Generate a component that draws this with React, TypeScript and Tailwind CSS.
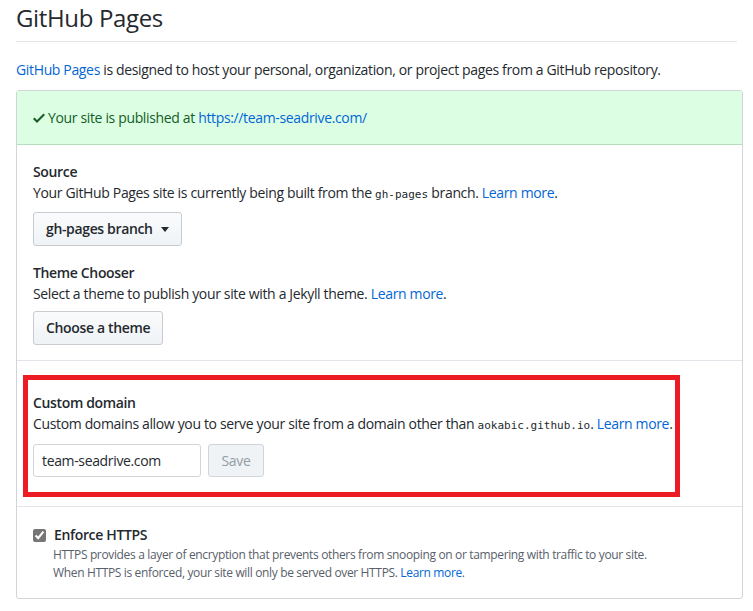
const font = { fontFamily: '"Segoe UI", "Open Sans", "Liberation Sans", sans-serif' };
const mono = { fontFamily: '"DejaVu Sans Mono", "Liberation Mono", monospace' };

function LearnMore() {
  return (
    <>
      {' '}
      <a href="#" className="text-[#0366d6]">Learn more</a>.
    </>
  );
}

export default function App() {
  return (
    <div className="bg-white text-[#24292e] text-sm tracking-[-0.025em] min-h-screen" style={font}>
      <div className="px-4 pt-[3px]">
        <h2 className="text-2xl font-normal leading-[30px] pb-2 border-b border-[#e1e4e8]">GitHub Pages</h2>
        <p className="mt-[17px] leading-[21px]">
          <a href="#" className="text-[#0366d6]">GitHub Pages</a> is designed to host your personal, organization, or project pages from a GitHub repository.
        </p>

        <div className="mt-[10px] border border-[#d1d5da] rounded-[3px] w-[727px]">
          <div className="bg-[#dcffe4] border-b border-[#b4dfbe] px-4 h-[54px] flex items-center text-[#165c26]">
            <svg width="12" height="16" viewBox="0 0 12 16" className="mr-[3px] fill-current">
              <path fillRule="evenodd" d="M12 5l-8 8-4-4 1.5-1.5L4 10l6.5-6.5L12 5z" />
            </svg>
            Your site is published at&nbsp;<a href="#" className="text-[#0366d6]">https://team-seadrive.com/</a>
          </div>

          <div className="px-4 pt-4 pb-[15px] border-b border-[#e1e4e8]">
            <div className="font-semibold leading-[21px]">Source</div>
            <p className="leading-[21px]">
              Your GitHub Pages site is currently being built from the{' '}
              <code className="text-[11px] tracking-normal" style={mono}>gh-pages</code> branch.
              <LearnMore />
            </p>
            <button className="mt-[7px] h-[34px] px-3 flex items-center gap-2 font-semibold border border-[#c8ccd1] rounded-[3px] bg-gradient-to-b from-[#fafbfc] to-[#eff3f6]">
              gh-pages branch
              <svg width="8" height="5" viewBox="0 0 8 5"><path d="M0 0h8L4 5z" fill="#24292e" /></svg>
            </button>

            <div className="font-semibold leading-[21px] mt-[16px]">Theme Chooser</div>
            <p className="leading-[21px]">
              Select a theme to publish your site with a Jekyll theme.
              <LearnMore />
            </p>
            <button className="mt-[7px] h-[34px] px-3 font-semibold border border-[#c8ccd1] rounded-[3px] bg-gradient-to-b from-[#fafbfc] to-[#eff3f6]">
              Choose a theme
            </button>
          </div>

          <div className="px-[6px] pt-[14px] pb-[9px] border-b border-[#e1e4e8]">
            <div className="w-[657px] border-[5px] border-[#ed1c24] px-[5px] pt-[12px] pb-[15px]">
              <div className="font-semibold leading-[21px]">Custom domain</div>
              <p className="leading-[21px] whitespace-nowrap">
                Custom domains allow you to serve your site from a domain other than{' '}
                <code className="text-[11px] tracking-normal" style={mono}>aokabic.github.io</code>.
                <LearnMore />
              </p>
              <div className="flex gap-[7px] mt-[8px]">
                <input
                  defaultValue="team-seadrive.com"
                  className="w-[168px] h-[33px] px-2 border border-[#d1d5da] rounded-[3px] text-sm text-[#24292e] outline-none"
                />
                <button className="w-[56px] h-[33px] border border-[#d1d5da] rounded-[3px] bg-[#eff3f6] text-[#959da5] font-medium">
                  Save
                </button>
              </div>
            </div>
          </div>

          <div className="px-4 pt-[18px] pb-[16px]">
            <div className="flex items-center gap-2">
              <input type="checkbox" defaultChecked className="w-[13px] h-[13px] accent-[#767676]" />
              <span className="font-semibold">Enforce HTTPS</span>
            </div>
            <p className="pl-[20px] text-xs text-[#586069] leading-[18px] mt-[1px]">
              HTTPS provides a layer of encryption that prevents others from snooping on or tampering with traffic to your site.
              <br />
              When HTTPS is enforced, your site will only be served over HTTPS.{' '}
              <a href="#" className="text-[#0366d6]">Learn more</a>.
            </p>
          </div>
        </div>
      </div>
    </div>
  );
}
